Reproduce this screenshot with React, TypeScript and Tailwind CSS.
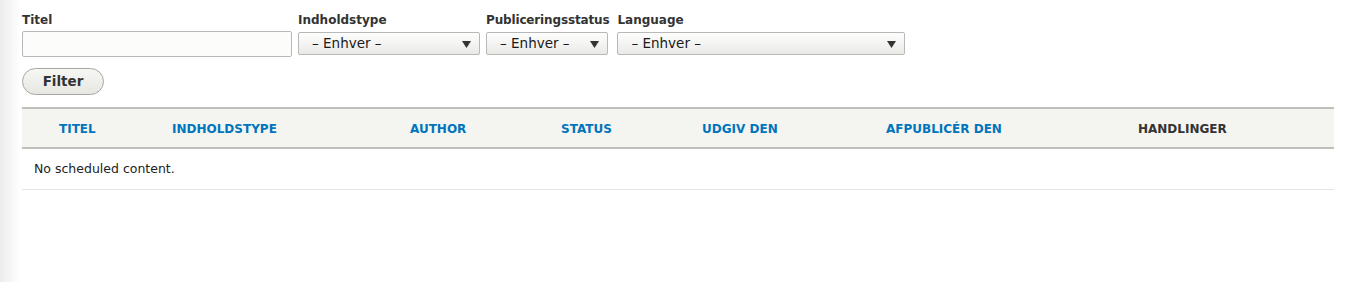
import { ChangeEvent, useState } from "react"

const font = "font-['Lucida_Grande','DejaVu_Sans',Verdana,sans-serif]"

const columns = [
    { label: "", width: "w-[25px]" },
    { label: "Titel", width: "w-[113px]", link: true },
    { label: "Indholdstype", width: "w-[238px]", link: true },
    { label: "Author", width: "w-[151px]", link: true },
    { label: "Status", width: "w-[141px]", link: true },
    { label: "Udgiv den", width: "w-[184px]", link: true },
    { label: "Afpublicér den", width: "w-[252px]", link: true },
    { label: "Handlinger", width: "w-[208px]" },
]

function Select({ width }: { width: string }) {
    return (
        <div className={`relative ${width} h-[23px] mt-[1px] border border-[#b8b8b8] rounded-[2px] bg-[linear-gradient(#fefefe,#e9e9e6)] flex items-center pl-[13px]`}>
            <span className="text-[13.5px] text-[#1a1a1a]">– Enhver –</span>
            <svg className="absolute right-[8px] top-[8px]" width="9" height="7" viewBox="0 0 9 7">
                <path d="M0 0h9L4.5 7z" fill="#333" />
            </svg>
        </div>
    )
}

export default function App() {

    const [title, setTitle] = useState("")

    return (
        <div className={`${font} w-[1355px] h-[282px] bg-[linear-gradient(to_right,#ededed_0px,#ffffff_21px)] text-[#333] pl-[22px] pr-[21px] pt-[12px]`}>
            <div className="flex items-start">
                <div className="flex flex-col">
                    <label className="text-[12px] font-bold leading-[16px] mb-[3px]">Titel</label>
                    <input
                        value={title}
                        onChange={(e: ChangeEvent<HTMLInputElement>) => setTitle(e.target.value)}
                        className="w-[270px] h-[26px] border border-[#b8b8b8] rounded-[2px] bg-[#fcfcfa] outline-none px-2 text-[13px]"
                    />
                </div>
                <div className="flex flex-col ml-[6px]">
                    <label className="text-[12px] font-bold leading-[16px] mb-[3px]">Indholdstype</label>
                    <Select width="w-[182px]" />
                </div>
                <div className="flex flex-col ml-[6px]">
                    <label className="text-[12px] font-bold leading-[16px] mb-[3px] tracking-[-0.15px]">Publiceringsstatus</label>
                    <Select width="w-[122px]" />
                </div>
                <div className="flex flex-col ml-[8px]">
                    <label className="text-[12px] font-bold leading-[16px] mb-[3px]">Language</label>
                    <Select width="w-[288px]" />
                </div>
            </div>
            <button className="mt-[11px] w-[82px] h-[27px] rounded-full border border-[#a6a6a6] bg-[linear-gradient(#f6f6f3,#e7e7e2)] text-[13.5px] font-bold text-[#333]">
                Filter
            </button>
            <table className="mt-[12px] w-[1312px] table-fixed border-collapse">
                <thead>
                    <tr className="bg-[#f4f4f0] border-y-2 border-[#bfbfba] h-[40px]">
                        {columns.map((c, i) => (
                            <th key={i} className={`${c.width} px-[12px] pt-[1px] text-left text-[12px] font-bold uppercase ${c.link ? "text-[#0074bd]" : "text-[#333]"}`}>
                                {c.label}
                            </th>
                        ))}
                    </tr>
                </thead>
                <tbody>
                    <tr className="border-b border-[#e6e4df] h-[41px]">
                        <td colSpan={8} className="px-[12px] pt-[1px] text-[12.5px] text-[#222]">No scheduled content.</td>
                    </tr>
                </tbody>
            </table>
        </div>
    )
}
